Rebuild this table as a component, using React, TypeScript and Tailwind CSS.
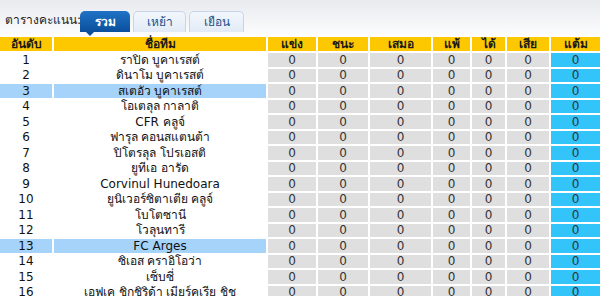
const teams = [
  "ราปิด บูคาเรสต์",
  "ดินาโม บูคาเรสต์",
  "สเตอัว บูคาเรสต์",
  "โอเตลุล กาลาติ",
  "CFR คลูจ์",
  "ฟารุล คอนสแตนต้า",
  "ปิโตรลุล โปรเอสติ",
  "ยูทีเอ อารัด",
  "Corvinul Hunedoara",
  "ยูนิเวอร์ซิตาเตีย คลูจ์",
  "โบโตซานี",
  "โวลุนทารี",
  "FC Arges",
  "ซิเอส คราอิโอว่า",
  "เซ็บซี่",
  "เอฟเค ชิกชิริด้า เมียร์คูเรีย ชิช",
];

const highlighted = [3, 13];
const stats = ["แข่ง", "ชนะ", "เสมอ", "แพ้", "ได้", "เสีย", "แต้ม"];

const App = () => {
  return (
    <div className="w-[600px] h-[296px] overflow-hidden bg-white text-[12px] text-[#111] font-['Tahoma','DejaVu_Sans',sans-serif]">
      <div className="h-[36px] bg-gradient-to-b from-[#e8eaee] to-[#fdfdfe] flex items-end pl-[5px]">
        <div className="w-[75px] overflow-hidden whitespace-nowrap text-[#222] pb-[7px]">ตารางคะแนน:</div>
        <div className="flex items-start gap-[3px] h-[25px]">
          <div className="relative">
            <div className="w-[50px] h-[21px] rounded-t-[5px] bg-gradient-to-b from-[#1f73c6] to-[#0a4f9c] text-white font-bold flex items-center justify-center">
              รวม
            </div>
            <div className="absolute left-[6px] top-[21px] w-0 h-0 border-l-[4px] border-r-[4px] border-t-[4px] border-l-transparent border-r-transparent border-t-[#0a4f9c]" />
          </div>
          <div className="w-[53px] h-[21px] rounded-t-[5px] border border-b-0 border-[#c6d6ea] bg-gradient-to-b from-[#f3f7fc] to-[#e2ebf6] text-[#1c4f87] flex items-center justify-center">
            เหย้า
          </div>
          <div className="w-[55px] h-[21px] rounded-t-[5px] border border-b-0 border-[#c6d6ea] bg-gradient-to-b from-[#f3f7fc] to-[#e2ebf6] text-[#1c4f87] flex items-center justify-center">
            เยือน
          </div>
        </div>
      </div>
      <div className="grid grid-cols-[52px_212px_48px_50px_61px_37px_33px_42px_49px] gap-[2px] pt-[1px]">
        <div className="h-[14px] bg-[#fdc800] font-bold text-[#1a1a1a] flex items-center justify-center leading-none">อันดับ</div>
        <div className="h-[14px] bg-[#fdc800] font-bold text-[#1a1a1a] flex items-center justify-center leading-none">ชื่อทีม</div>
        {stats.map((s) => (
          <div key={s} className="h-[14px] bg-[#fdc800] font-bold text-[#1a1a1a] flex items-center justify-center leading-none">
            {s}
          </div>
        ))}
        {teams.map((team, i) => {
          const hl = highlighted.includes(i + 1);
          return (
            <div key={team} className="contents">
              <div className={`h-[13.5px] flex items-center justify-center leading-none ${hl ? "bg-[#a6d3fa]" : "bg-white"}`}>{i + 1}</div>
              <div className={`h-[13.5px] flex items-center justify-center leading-none whitespace-nowrap ${hl ? "bg-[#a6d3fa]" : "bg-white"}`}>{team}</div>
              {stats.map((s, j) => (
                <div
                  key={s}
                  className={`h-[13.5px] flex items-center justify-center leading-none text-[#333] ${j === 6 ? "bg-[#33c4fa]" : "bg-[#dfdfdf]"}`}
                >
                  0
                </div>
              ))}
            </div>
          );
        })}
      </div>
    </div>
  );
};

export default App;
